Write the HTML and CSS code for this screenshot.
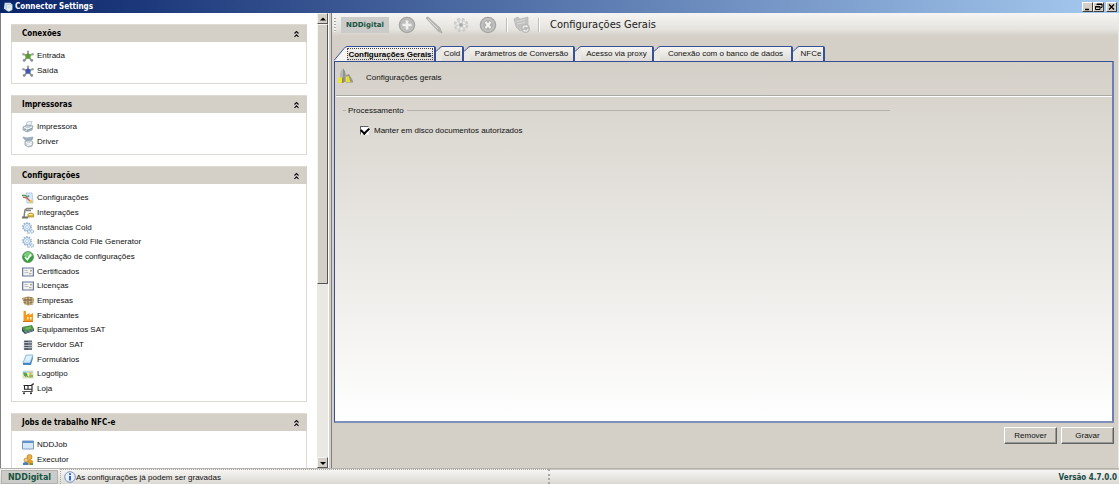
FILE: index.html
```html
<!DOCTYPE html>
<html lang="pt-BR">
<head>
<meta charset="utf-8">
<title>Connector Settings</title>
<link rel="stylesheet" href="styles.css">
</head>
<body>
<svg class="sprite" aria-hidden="true">
  <symbol id="star" viewBox="0 0 12 12"><path d="M6 6V1M6 6L1 4M6 6l5-2M6 6l-4 5M6 6l4 5" stroke="#8b9290" stroke-width="1.8"/><circle cx="6" cy="1.6" r="1.2" fill="#a2a8a6"/><circle cx="1.3" cy="4.3" r="1.2" fill="#a2a8a6"/><circle cx="10.7" cy="4.3" r="1.2" fill="#a2a8a6"/><circle cx="2.200" cy="10.400" r="1.4" fill="#8d9290"/><circle cx="9.800" cy="10.400" r="1.4" fill="#8d9290"/><circle cx="6" cy="6.200" r="2.600" fill="currentColor"/></symbol>
  <symbol id="printer" viewBox="0 0 12 12"><path d="M4 5L5 1l5-1-1 4z" fill="#eef5f8" stroke="#9fb4c2" stroke-width=".6"/><path d="M1 6l4-2 6 1-1 4-5 2-4-2z" fill="#c3cfd8" stroke="#8496a5" stroke-width=".7"/><path d="M2 6.500l4 1.500 4-2" fill="none" stroke="#f7fbfd"/><path d="M5 9.500l5-2" stroke="#6e8191" stroke-width=".8"/><circle cx="3" cy="8.300" r=".7" fill="#69a36b"/></symbol>
  <symbol id="driver" viewBox="0 0 12 12"><path d="M1 1l4 1 6-1-1 3-5 1-3-2z" fill="#9fb1c0" stroke="#8195a7" stroke-width=".6"/><path d="M3 5l5-1 3 2-1 4-4 1-3-2z" fill="#cad5dd" stroke="#8496a5" stroke-width=".7"/><path d="M4 6.500l3 1.500 3-2M5 9.500l5-1.500" fill="none" stroke="#fff"/></symbol>
  <symbol id="config" viewBox="0 0 12 12"><path d="M4 1h6l1 10H5z" fill="#dceaf8" stroke="#9dbbd9" stroke-width=".7"/><path d="M0 3.500h3l3 2" fill="none" stroke="#4b9b53" stroke-width="1.500"/><path d="M1 5.200l4 .8 3 3" fill="none" stroke="#d65a4c" stroke-width="1.300"/><circle cx="9" cy="9.500" r="1.600" fill="#edc63e"/><circle cx="6.500" cy="4" r=".9" fill="#5a91cc"/></symbol>
  <symbol id="robot" viewBox="0 0 12 12"><path d="M2 10l1-7 2-1.500h6M4 3.500h5" fill="none" stroke="#82817c" stroke-width="1.500"/><path d="M0 10.500h6" stroke="#6f706c" stroke-width="2"/><path d="M6 7l3-1 2.500 1v3H6z" fill="#e4b634" stroke="#a27e28" stroke-width=".7"/><path d="M6.500 7.500h4" stroke="#fff0a8"/></symbol>
  <symbol id="gears" viewBox="0 0 12 12"><circle cx="5" cy="5" r="3.500" fill="#edf5fc" stroke="#95b5d6"/><circle cx="5" cy="5" r="4.300" fill="none" stroke="#8eaed0" stroke-width="1.300" stroke-dasharray="1.400 1.300"/><circle cx="5" cy="5" r="1.500" fill="#fff" stroke="#9ab7d3" stroke-width=".7"/><circle cx="10" cy="9.500" r="1.600" fill="#e5f0fa" stroke="#7296bb" stroke-width=".9" stroke-dasharray="1.300 .6"/><path d="M5 11h3" stroke="#8eaed0"/></symbol>
  <symbol id="check" viewBox="0 0 12 12"><circle cx="6" cy="6" r="5.500" fill="#34a33b" stroke="#54845a" stroke-width=".7"/><path d="M1.500 5a4.500 4 0 0 1 9 0q-4 2-9 0" fill="#7bcd7a"/><path d="M3 6l2.300 2.600L9 3.500" fill="none" stroke="#fff" stroke-width="1.700"/></symbol>
  <symbol id="cert" viewBox="0 0 12 12"><path d="M.6 2h10.800v8H.6z" fill="#f3f2ec" stroke="#6876a0" stroke-width="1.200"/><path d="M2.500 4.500h3M2.500 6.500h4" stroke="#a0a7ba" stroke-width=".7"/><circle cx="9" cy="4.700" r=".9" fill="#999b82"/><path d="M7 7.700h2.500" stroke="#87927e" stroke-width=".8"/></symbol>
  <symbol id="company" viewBox="0 0 12 12"><path d="M0 3l6-1.500 5 1 1 2-1 5-5 1-4-1.500z" fill="#a78b5c"/><path d="M1 4l5-1 5 1M1 6.500l5 .5 5-1M2 8.500l4 .8 5-1" fill="none" stroke="#e2cfa5"/><path d="M3 3v6M6 2v8M9 2v7" stroke="#675034" stroke-width=".7"/></symbol>
  <symbol id="factory" viewBox="0 0 12 12"><path d="M1.500 11V1h2.500v4l3.500-2v2l3.500-2v8z" fill="#f29a1e"/><path d="M1 11.500h10" stroke="#cf741b"/><path d="M5 7h1.500v2.500H5zM8 7h1.500v2.500H8z" fill="#fff2bb"/></symbol>
  <symbol id="chip" viewBox="0 0 12 12"><path d="M0 3l10-2 2 4-9 3z" fill="#489148"/><path d="M0 3v4l3 3 9-3V5L3 8z" fill="#314d60"/><path d="M2.500 4l6-1.500 1 2-5 1.500z" fill="#78b653"/><path d="M3 9l8-2.500" stroke="#8a9cab" stroke-width=".7"/></symbol>
  <symbol id="server" viewBox="0 0 12 12"><path d="M2 1.500h8v2H2zM2 4h8v2H2zM2 6.500h8v2H2zM2 9h8v2H2z" fill="#687080"/><path d="M1 3.600h10M1 6.200h10M1 8.700h10" stroke="#b9bdc8" stroke-width=".6"/><path d="M3 2.500h3M3 5h3M3 7.500h3M3 10h3" stroke="#3c4350" stroke-width=".8"/></symbol>
  <symbol id="form" viewBox="0 0 12 12"><path d="M4 1h7L8 9H1z" fill="#cee9fb" stroke="#72a8d2" stroke-width=".7"/><path d="M1 9h7l3-7v2L9 11H1z" fill="#4689c0"/><path d="M5 3h4M4 5h4" stroke="#fff" stroke-width=".8"/></symbol>
  <symbol id="picture" viewBox="0 0 12 12"><path d="M1 3h10v7H1z" fill="#e8f2c9" stroke="#b9cf9e" stroke-width=".6"/><path d="M1 3h10v2H1z" fill="#b5daf0"/><path d="M1 4.500h3l1.500 2L4 9.500l-2-2z" fill="#55a444"/><path d="M6 9.500l2-3.500 3 1v2.500z" fill="#8fbc55"/><circle cx="8.500" cy="5" r="1.300" fill="#efbb41"/><path d="M4.500 7l1.500 2" stroke="#cc5d4b"/></symbol>
  <symbol id="cart" viewBox="0 0 12 12"><path d="M12 .8L10 1.500v7H2M1.500 2.500H10M2.500 2.500v3.800H10M6 3v3" fill="none" stroke="#252525" stroke-width="1.100"/><circle cx="2" cy="10.300" r="1" fill="#252525"/><circle cx="9" cy="10.300" r="1" fill="#252525"/><path d="M0 8.500h10" stroke="#555" stroke-width=".8"/></symbol>
  <symbol id="job" viewBox="0 0 12 12"><path d="M.5 2h11v8H.5z" fill="#d6e7f7" stroke="#7b9bc0"/><path d="M.5 2h11v2H.5z" fill="#6293cb"/></symbol>
  <symbol id="people" viewBox="0 0 12 12"><circle cx="7.500" cy="3" r="2.500" fill="#efb13d" stroke="#bd7920" stroke-width=".7"/><path d="M5 11V7q3-3 6 0v4z" fill="#e69d27"/><circle cx="4" cy="6" r="2" fill="#f7cf78" stroke="#a97b32" stroke-width=".6"/><path d="M1 11V9q3-2 5 0v2z" fill="#4181c7"/><path d="M8 9h3v2H8z" fill="#5c9b53"/></symbol>
  <symbol id="chevrons" viewBox="0 0 7 8"><path d="M1.500 3.500l2-2 2 2M1.500 6.800l2-2 2 2" fill="none" stroke="#111" stroke-width="1.200"/></symbol>
  <symbol id="curve" viewBox="0 0 6 15"><path d="M0 15V6L6 .5V15z" fill="#eae8e3"/><path d="M0 5.500L3 2.500Q5 .5 6 .5" fill="none" stroke="#374f94"/></symbol>
</svg>

<div class="window">
  <header class="titlebar">
    <svg class="app-icon" viewBox="0 0 12 12" aria-hidden="true"><path d="M2 1h7l2 2v7H4L1 8z" fill="#cddde9"/><path d="M4 3h7v6q-4 4-7 1z" fill="#edf6f8" stroke="#8aacc3" stroke-width=".6"/><path d="M5 5h4M5 7h4" stroke="#9ebdce" stroke-width=".7"/></svg>
    <h1 class="window-title">Connector Settings</h1>
    <div class="window-buttons">
      <button class="caption" aria-label="Minimizar"><svg viewBox="0 0 9 8"><path d="M2 6.500h4" stroke="#000" stroke-width="1.500"/></svg></button>
      <button class="caption" aria-label="Restaurar"><svg viewBox="0 0 9 8"><path d="M3 2V1h5v3.500H6.500M1.500 3.500h4.500v3H1.500zM3 1.500h5M1.500 4h4.500" fill="none" stroke="#000"/></svg></button>
      <button class="caption close" aria-label="Fechar"><svg viewBox="0 0 9 8"><path d="M2 1.500l5 5M7 1.500l-5 5" stroke="#000" stroke-width="1.300"/></svg></button>
    </div>
  </header>

  <div class="workspace">
    <aside class="sidebar">
      <nav class="groups">
        <section class="group">
          <h2 class="group-title">Conexões<button class="collapse" aria-label="Recolher Conexões"><svg><use href="#chevrons"/></svg></button></h2>
          <ul class="items">
            <li><a href="#"><svg class="green"><use href="#star"/></svg>Entrada</a></li>
            <li><a href="#"><svg class="blue"><use href="#star"/></svg>Saída</a></li>
          </ul>
        </section>
        <section class="group">
          <h2 class="group-title">Impressoras<button class="collapse" aria-label="Recolher Impressoras"><svg><use href="#chevrons"/></svg></button></h2>
          <ul class="items">
            <li><a href="#"><svg><use href="#printer"/></svg>Impressora</a></li>
            <li><a href="#"><svg><use href="#driver"/></svg>Driver</a></li>
          </ul>
        </section>
        <section class="group">
          <h2 class="group-title">Configurações<button class="collapse" aria-label="Recolher Configurações"><svg><use href="#chevrons"/></svg></button></h2>
          <ul class="items">
            <li><a href="#"><svg><use href="#config"/></svg>Configurações</a></li>
            <li><a href="#"><svg><use href="#robot"/></svg>Integrações</a></li>
            <li><a href="#"><svg><use href="#gears"/></svg>Instâncias Cold</a></li>
            <li><a href="#"><svg><use href="#gears"/></svg>Instância Cold File Generator</a></li>
            <li><a href="#"><svg><use href="#check"/></svg>Validação de configurações</a></li>
            <li><a href="#"><svg><use href="#cert"/></svg>Certificados</a></li>
            <li><a href="#"><svg><use href="#cert"/></svg>Licenças</a></li>
            <li><a href="#"><svg><use href="#company"/></svg>Empresas</a></li>
            <li><a href="#"><svg><use href="#factory"/></svg>Fabricantes</a></li>
            <li><a href="#"><svg><use href="#chip"/></svg>Equipamentos SAT</a></li>
            <li><a href="#"><svg><use href="#server"/></svg>Servidor SAT</a></li>
            <li><a href="#"><svg><use href="#form"/></svg>Formulários</a></li>
            <li><a href="#"><svg><use href="#picture"/></svg>Logotipo</a></li>
            <li><a href="#"><svg><use href="#cart"/></svg>Loja</a></li>
          </ul>
        </section>
        <section class="group">
          <h2 class="group-title">Jobs de trabalho NFC-e<button class="collapse" aria-label="Recolher Jobs de trabalho NFC-e"><svg><use href="#chevrons"/></svg></button></h2>
          <ul class="items">
            <li><a href="#"><svg><use href="#job"/></svg>NDDJob</a></li>
            <li><a href="#"><svg><use href="#people"/></svg>Executor</a></li>
          </ul>
        </section>
      </nav>
      <div class="scrollbar">
        <button class="arrow" aria-label="Rolar para cima"><svg viewBox="0 0 8 8"><path d="M1 5.500L4 2.500l3 3z"/></svg></button>
        <div class="track"><div class="thumb"></div></div>
        <button class="arrow" aria-label="Rolar para baixo"><svg viewBox="0 0 8 8"><path d="M1 3l3 3 3-3z"/></svg></button>
      </div>
    </aside>

    <main class="content">
      <div class="toolbar">
        <span class="grip"></span>
        <span class="brand">NDDigital</span>
        <button class="tool" aria-label="Adicionar"><svg viewBox="0 0 18 18"><circle cx="9" cy="9" r="7.600" fill="#bdbdbb" stroke="#a5a5a3" stroke-width="1.400"/><path d="M9 4.500v9M4.500 9h9" stroke="#f0f0ee" stroke-width="2.600"/></svg></button>
        <button class="tool" aria-label="Editar"><svg viewBox="0 0 18 18"><path d="M1 2l2-1 12 11 2 5-4-2z" fill="#b7b7b5" stroke="#a3a3a1" stroke-width=".7"/><path d="M3 3l10 10" stroke="#dededc"/></svg></button>
        <button class="tool" aria-label="Opções"><svg viewBox="0 0 18 18"><circle cx="9" cy="9" r="5.500" fill="#cfcfcd"/><circle cx="9" cy="9" r="6.300" fill="none" stroke="#cbcbc9" stroke-width="2" stroke-dasharray="3 1.950"/><circle cx="9" cy="9" r="3.600" fill="none" stroke="#ededeb" stroke-width="2.200" stroke-dasharray="2.300 1.470"/><circle cx="9" cy="9" r="1.700" fill="#a9a9a7"/></svg></button>
        <button class="tool" aria-label="Excluir"><svg viewBox="0 0 18 18"><circle cx="9" cy="9" r="7.600" fill="#c2c2c0" stroke="#a5a5a3" stroke-width="1.400"/><circle cx="9" cy="9" r="5" fill="#b2b2b0"/><path d="M6.500 6l5 6M11.500 6l-5 6" stroke="#f4f4f2" stroke-width="2"/></svg></button>
        <span class="divider"></span>
        <button class="tool" aria-label="Atualizar"><svg viewBox="0 0 18 18"><path d="M1 3l4-2 2 2 8-2v9l-8 5-4-4z" fill="#c2c2c0" stroke="#b8b8b6" stroke-width=".7"/><path d="M3 5.500l9-2M4 8l8-1.500" stroke="#dadad8"/><circle cx="12.500" cy="12.500" r="4.500" fill="#b9b9b7"/><path d="M10 12.500a2.500 2.500 0 0 1 4.500-1.500M15 13a2.500 2.500 0 0 1-4.500 1" fill="none" stroke="#eee" stroke-width="1.300"/></svg></button>
        <span class="divider"></span>
        <h2 class="page-title">Configurações Gerais</h2>
      </div>

      <div class="settings">
        <div class="tabs" role="tablist">
          <button class="tab active" role="tab" aria-selected="true"><svg class="slant" viewBox="0 0 13 15"><path d="M0 15V14L10 2.500Q12 .5 13 .5V15z" fill="#f5f4f0"/><path d="M0 14.500L10 2.500Q11.500 .5 13 .5" fill="none" stroke="#374f94"/></svg><span class="tab-face"><span class="focus">Configurações Gerais</span></span></button>
          <button class="tab tab-xs" role="tab"><svg class="curve"><use href="#curve"/></svg><span class="tab-face">Cold</span></button>
          <button class="tab tab-lg" role="tab"><svg class="curve"><use href="#curve"/></svg><span class="tab-face">Parâmetros de Conversão</span></button>
          <button class="tab tab-md" role="tab"><svg class="curve"><use href="#curve"/></svg><span class="tab-face">Acesso via proxy</span></button>
          <button class="tab tab-xl" role="tab"><svg class="curve"><use href="#curve"/></svg><span class="tab-face">Conexão com o banco de dados</span></button>
          <button class="tab tab-sm" role="tab"><svg class="curve"><use href="#curve"/></svg><span class="tab-face">NFCe</span></button>
        </div>
        <section class="panel" role="tabpanel">
          <div class="panel-head">
            <svg class="panel-icon" viewBox="0 0 16 16" aria-hidden="true"><path d="M2 14V6q1-4 3-5.500Q7 2 7.500 6v8z" fill="#b5b5b1"/><path d="M5 .5Q7 2 7.500 6v8H5z" fill="#93938f"/><path d="M8 7l3-1 4 7v1.500H8z" fill="#96958c"/><path d="M.5 9.500H4V15H0z" fill="#eee52d"/><path d="M8 8.500l2.500-.5 2 6H8z" fill="#e8dd28"/><path d="M4 9.500l1.500 1V15H4z" fill="#8d8b50"/></svg>
            <span>Configurações gerais</span>
          </div>
          <fieldset class="processing">
            <legend>Processamento</legend>
            <label class="option"><input type="checkbox" checked>Manter em disco documentos autorizados</label>
          </fieldset>
        </section>
        <div class="actions">
          <button class="action">Remover</button>
          <button class="action">Gravar</button>
        </div>
      </div>
    </main>
  </div>

  <footer class="statusbar">
    <span class="brand status-brand">NDDigital</span>
    <span class="message"><svg viewBox="0 0 12 12" aria-hidden="true"><circle cx="6" cy="6" r="5.300" fill="#e9f1fc" stroke="#718bb8" stroke-width=".9"/><path d="M6 5v4.500M6 2.300v1.600" stroke="#2454c4" stroke-width="1.800"/></svg>As configurações já podem ser gravadas</span>
    <span class="version">Versão 4.7.0.0</span>
  </footer>
</div>
</body>
</html>
```
FILE: styles.css
```css
* { box-sizing: border-box; }
body {
  margin: 0;
  font: 8px/15px "Liberation Sans", Arial, sans-serif;
  color: #101010;
  background: #d4d0c8;
}
button { font: inherit; color: inherit; margin: 0; padding: 0; border: 0; background: none; }
h1, h2, ul { margin: 0; padding: 0; }
svg { display: block; flex: none; }
.sprite { display: none; }
.window { height: 100vh; display: flex; flex-direction: column; }

.titlebar {
  flex: none;
  height: 13px;
  display: flex;
  align-items: center;
  padding: 0 2px 0 3px;
  background: linear-gradient(90deg, #0a246a, #a6caf0);
}
.app-icon { width: 10px; height: 10px; }
.window-title {
  flex: 1;
  padding-left: 2px;
  font: bold 8px/13px "DejaVu Sans Condensed", sans-serif;
  color: #fff;
}
.window-buttons { display: flex; }
.caption {
  width: 11px;
  height: 10px;
  background: #d4d0c8;
  border: 1px solid;
  border-color: #fff #404040 #404040 #fff;
}
.caption svg { width: 9px; height: 8px; }
.caption.close { margin-left: 2px; }

.workspace { flex: 1; min-height: 0; display: flex; }
.sidebar {
  flex: none;
  width: 331px;
  display: flex;
  background: #fff;
  border-left: 1px solid #808080;
  border-right: 2px solid #d4d0c8;
}
.groups {
  flex: 1;
  min-width: 0;
  overflow: hidden;
  display: flex;
  flex-direction: column;
  gap: 11px;
  padding: 11px 10px 0;
}
.group { flex: none; border: 1px solid #dcdad3; }
.group-title {
  display: flex;
  align-items: center;
  justify-content: space-between;
  height: 17px;
  margin: 0 -1px;
  padding: 0 7px 0 11px;
  background: #d4d0c8;
  font: bold 8px/17px "DejaVu Sans Condensed", sans-serif;
  color: #000;
}
.collapse svg { width: 7px; height: 8px; }
.items { list-style: none; padding: 6px 10px 5px; }
.items li { height: 15px; }
.items li:nth-child(3n) { height: 14px; }
.items a { display: flex; align-items: center; gap: 3px; color: inherit; text-decoration: none; }
.items svg { width: 12px; height: 12px; }
.green { color: #56a02c; }
.blue { color: #4058ad; }

.scrollbar {
  width: 11px;
  margin-right: 1px;
  display: flex;
  flex-direction: column;
  background: #eae8e3;
}
.arrow {
  height: 11px;
  display: grid;
  place-items: center;
  background: #d4d0c8;
  border: 1px solid;
  border-color: #f5f4f1 #555 #555 #f5f4f1;
}
.arrow svg { width: 8px; height: 8px; }
.track { flex: 1; }
.thumb {
  height: 60%;
  background: #d4d0c8;
  border: 1px solid;
  border-color: #f5f4f1 #555 #555 #f5f4f1;
}

.content {
  flex: 1;
  min-width: 0;
  display: flex;
  flex-direction: column;
  border-left: 1px solid #808080;
  border-right: 1px solid #eceae6;
}
.toolbar {
  flex: none;
  height: 23px;
  display: flex;
  align-items: center;
  padding-left: 2px;
  background: linear-gradient(#f6f5f3, #e6e4df 70%, #d4d0c8);
}
.grip { width: 2px; height: 14px; background: repeating-linear-gradient(#a9a7a1 0 1px, #f4f3f0 1px 3px); }
.brand {
  font: bold 7px/16px "DejaVu Sans", sans-serif;
  color: #17543f;
  background: #cbcbca;
  text-align: center;
}
.toolbar .brand { width: 48px; margin: 0 9px 0 5px; }
.tool { width: 18px; height: 18px; margin-right: 9px; }
.tool svg { width: 18px; height: 18px; }
.divider { width: 2px; height: 14px; margin-right: 5px; background: #bfbdb7; border-right: 1px solid #fff; }
.divider + .tool { margin-right: 7px; }
.page-title { padding-left: 5px; font: 11px/20px "DejaVu Sans Condensed", sans-serif; color: #202020; }

.settings { flex: 1; min-height: 0; display: flex; flex-direction: column; padding: 10px 4px 24px 2px; }
.tabs { flex: none; display: flex; height: 15px; }
.tab { display: flex; height: 15px; }
.tab-face {
  flex: 1;
  height: 15px;
  line-height: 14px;
  text-align: center;
  white-space: nowrap;
  background: linear-gradient(#f6f5f2, #dedbd5);
  border-top: 1px solid #374f94;
  border-right: 2px solid #374f94;
  border-top-right-radius: 2px;
}
.slant { width: 13px; height: 15px; }
.curve { width: 6px; height: 15px; }
.active { width: 102px; font-weight: bold; color: #000; }
.focus { display: block; height: 12px; margin: 1px 1px 0 0; line-height: 11px; border: 1px dotted #444; }
.tab-xs { width: 28px; }
.tab-sm { width: 32px; }
.tab-md { width: 79px; }
.tab-lg { width: 111px; }
.tab-xl { width: 139px; }
.panel {
  flex: 1;
  border: 1px solid #374f94;
  border-width: 1px 2px 2px 1px;
  border-color: #374f94 #6f80b0 #7f90b8 #374f94;
  background: linear-gradient(#d4d0c8, #fff);
}
.panel-head {
  display: flex;
  align-items: center;
  gap: 12px;
  height: 35px;
  margin-left: 1px;
  padding: 0 0 3px 2px;
  border-bottom: 1px solid #fff;
  box-shadow: inset 0 -1px #aaa8a3;
}
.panel-icon { width: 16px; height: 16px; margin-bottom: 3px; }
.processing {
  width: 547px;
  max-width: 100%;
  margin: 6px 0 0 8px;
  padding: 5px 0 0 17px;
  border: 0;
  border-top: 1px solid #b4b2ac;
}
.processing legend { margin-left: -14px; padding: 0 3px 0 2px; }
.option { display: flex; align-items: center; gap: 5px; }
.option input {
  appearance: none;
  width: 9px;
  height: 9px;
  margin: 0;
  display: grid;
  place-items: center;
  background: #fff;
  border: 1px solid;
  border-color: #606060 #eee #eee #606060;
}
.option input:checked::before {
  content: "";
  width: 6px;
  height: 4px;
  border: solid #000;
  border-width: 0 0 2px 2px;
  rotate: -45deg;
  margin-bottom: 2px;
}
.actions { flex: none; display: flex; justify-content: flex-end; gap: 4px; padding-top: 4px; }
.action {
  width: 53px;
  height: 17px;
  background: #d4d0c8;
  border: 1px solid;
  border-color: #fff #606060 #606060 #fff;
  box-shadow: inset -1px -1px #9b9993;
}

.statusbar {
  flex: none;
  height: 16px;
  display: flex;
  align-items: stretch;
  border-top: 1px solid #b4b2ac;
  background: linear-gradient(#f8f7f5, #dcd9d3);
}
.statusbar .brand { width: 57px; margin: 1px 2px 0 1px; border: 1px solid #b2b2b0; font-size: 8px; line-height: 14px; }
.message {
  flex: 0 0 490px;
  display: flex;
  align-items: center;
  padding-left: 3px;
  border: dotted #aaa8a3;
  border-width: 1px 2px 0 1px;
}
.message svg { width: 12px; height: 12px; }
.version {
  flex: 1;
  padding-right: 2px;
  text-align: right;
  font: bold 8px/15px "DejaVu Sans Condensed", sans-serif;
  color: #174b45;
  border-top: 1px solid #c8c6c0;
}
```
